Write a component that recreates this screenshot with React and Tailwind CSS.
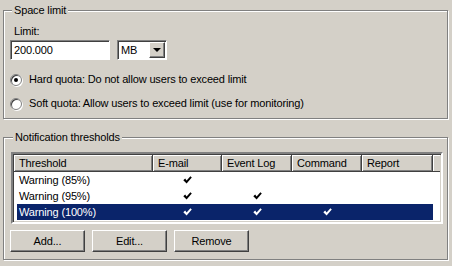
import React from "react";

const font = { fontFamily: '"Liberation Sans", Arial, sans-serif' };

function Check({ white }) {
  return (
    <svg width="9" height="8" viewBox="0 0 9 8" className="block">
      <path
        d="M0.3 4.2 L2.2 2.6 L3.6 4.4 L7.4 0.2 L8.8 1.4 L3.6 7.6 Z"
        fill={white ? "#ffffff" : "#000000"}
      />
    </svg>
  );
}

function Radio({ checked }) {
  return (
    <div className="w-[12px] h-[12px] rounded-full bg-white border border-[#808080] shadow-[inset_1px_1px_0_#404040,1px_1px_0_#fff] flex items-center justify-center">
      {checked && <div className="w-[4px] h-[4px] rounded-full bg-black" />}
    </div>
  );
}

function Button({ children }) {
  return (
    <div className="w-[75px] h-[22px] border border-t-white border-l-white border-r-[#404040] border-b-[#404040] shadow-[inset_-1px_-1px_0_#808080] flex items-center justify-center text-[11px] text-black">
      {children}
    </div>
  );
}

const cols = [
  { label: "Threshold", w: "w-[139px]" },
  { label: "E-mail", w: "w-[69px]" },
  { label: "Event Log", w: "w-[70px]" },
  { label: "Command", w: "w-[70px]" },
  { label: "Report", w: "w-[71px]" },
];

const rows = [
  { name: "Warning (85%)", c: [true, false, false, false] },
  { name: "Warning (95%)", c: [true, true, false, false] },
  { name: "Warning (100%)", c: [true, true, true, false], sel: true },
];

export default function App() {
  return (
    <div
      className="w-[452px] h-[266px] bg-[#d4d0c8] pl-[3px] pt-[10px] text-[11px] leading-[13px] tracking-[-0.15px] text-black overflow-hidden"
      style={font}
    >
      {/* Space limit group */}
      <div className="relative w-[445px] h-[109px] border border-[#808080] shadow-[inset_1px_1px_0_#fff,1px_1px_0_#fff] pl-[6px] pt-[14px]">
        <div className="absolute left-[8px] top-[-7px] px-[2px] bg-[#d4d0c8]">Space limit</div>
        <div className="ml-[4px]">Limit:</div>
        <div className="flex mt-[2px]">
          <div className="w-[100px] h-[20px] bg-white border border-t-[#808080] border-l-[#808080] border-r-white border-b-white shadow-[inset_1px_1px_0_#404040] flex items-center pl-[3px]">
            200.000
          </div>
          <div className="ml-[7px] w-[50px] h-[20px] bg-white border border-t-[#808080] border-l-[#808080] border-r-white border-b-white shadow-[inset_1px_1px_0_#404040] flex items-center justify-between pl-[3px] pr-[1px]">
            <span>MB</span>
            <div className="w-[16px] h-[16px] bg-[#d4d0c8] border border-t-white border-l-white border-r-[#404040] border-b-[#404040] shadow-[inset_-1px_-1px_0_#808080] flex items-center justify-center">
              <div className="w-0 h-0 border-l-[4px] border-r-[4px] border-t-[4px] border-l-transparent border-r-transparent border-t-black" />
            </div>
          </div>
        </div>
        <div className="flex items-center mt-[13px]">
          <Radio checked />
          <span className="ml-[7px]">Hard quota: Do not allow users to exceed limit</span>
        </div>
        <div className="flex items-center mt-[11px]">
          <Radio />
          <span className="ml-[7px]">Soft quota: Allow users to exceed limit (use for monitoring)</span>
        </div>
      </div>

      {/* Notification thresholds group */}
      <div className="relative mt-[18px] w-[445px] h-[123px] border border-[#808080] shadow-[inset_1px_1px_0_#fff,1px_1px_0_#fff] pl-[6px] pt-[14px]">
        <div className="absolute left-[9px] top-[-7px] px-[2px] bg-[#d4d0c8]">Notification thresholds</div>
        <div className="ml-[1px] w-[432px] h-[72px] bg-white border-2 border-t-[#808080] border-l-[#808080] border-r-white border-b-white shadow-[inset_1px_1px_0_#404040,inset_-1px_-1px_0_#d4d0c8] p-[1px] flex flex-col">
          <div className="flex h-[17px]">
            {cols.map((c) => (
              <div
                key={c.label}
                className={`${c.w} h-[17px] bg-[#d4d0c8] border-r border-b border-[#404040] shadow-[inset_1px_1px_0_#fff,inset_-1px_-1px_0_#808080] pl-[5px] flex items-center`}
              >
                {c.label}
              </div>
            ))}
            <div className="flex-1 h-[17px] bg-[#d4d0c8] border-b border-[#404040] shadow-[inset_1px_1px_0_#fff]" />
          </div>
          {rows.map((r) => (
            <div key={r.name} className="flex h-[16px] pl-[3px]">
              <div className={`flex h-[16px] ${r.sel ? "bg-[#0a246a] text-white" : ""}`}>
                <div className="w-[136px] flex items-center pl-[2px]">{r.name}</div>
                {r.c.map((v, i) => (
                  <div
                    key={i}
                    className={`${i === 0 ? "w-[69px]" : i === 3 ? "w-[71px]" : "w-[70px]"} flex items-center justify-center`}
                  >
                    {v && <Check white={r.sel} />}
                  </div>
                ))}
              </div>
            </div>
          ))}
        </div>
        <div className="flex gap-[7px] mt-[6px]">
          <Button>Add...</Button>
          <Button>Edit...</Button>
          <Button>Remove</Button>
        </div>
      </div>
    </div>
  );
}
